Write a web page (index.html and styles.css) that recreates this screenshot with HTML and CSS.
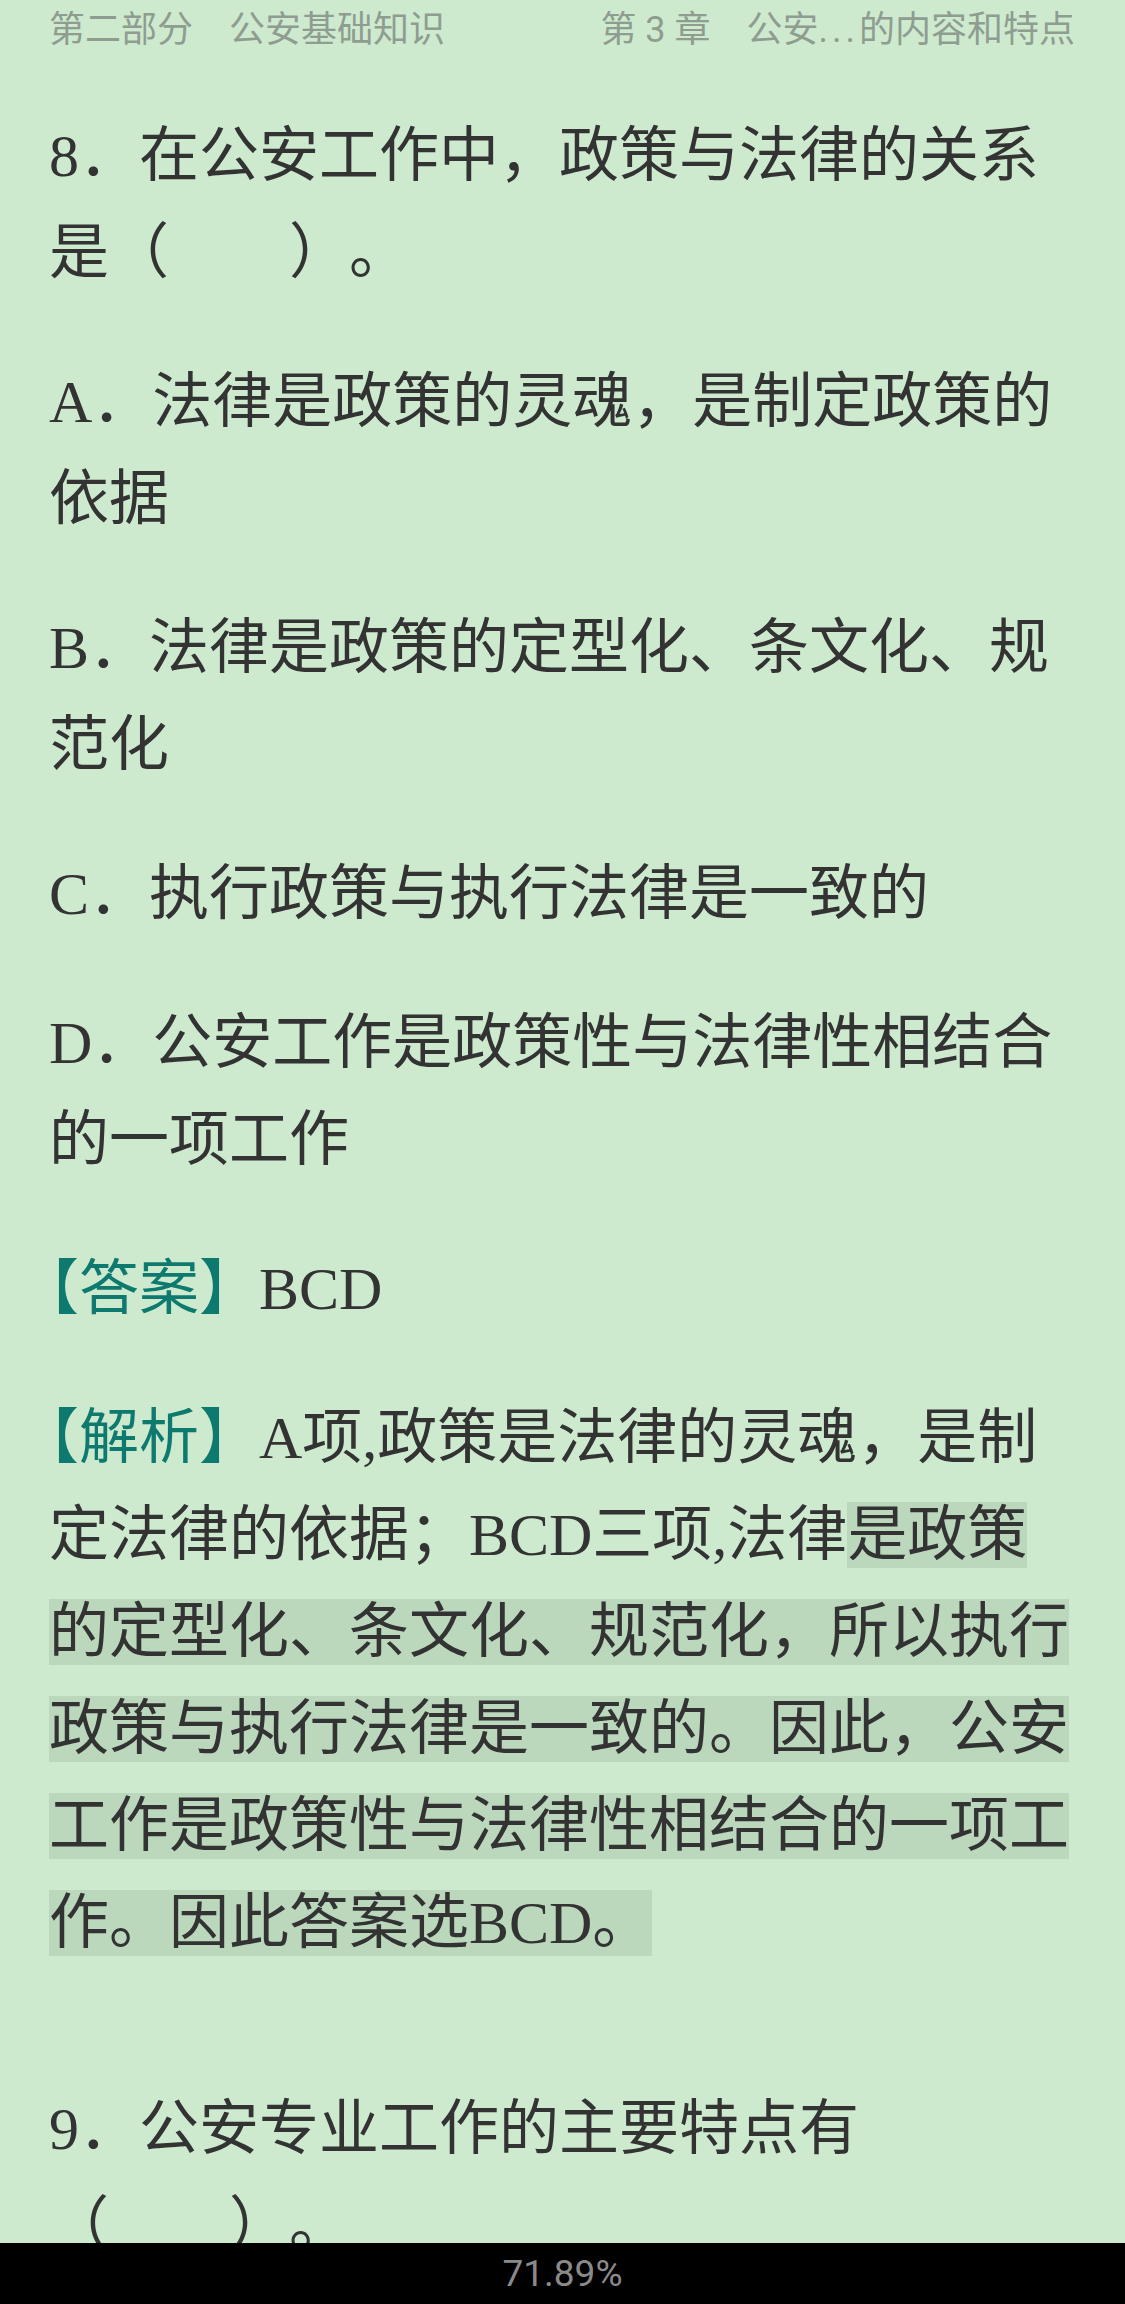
FILE: index.html
```html
<!DOCTYPE html>
<html lang="zh-CN">
<head>
    <meta charset="UTF-8">
    <meta name="viewport" content="width=device-width, initial-scale=1.0">
    <title>公安基础知识</title>
    <link rel="stylesheet" href="styles.css">
</head>
<body>
    <div class="header">
        <span>第二部分　公安基础知识</span>
        <span>第 3 章　公安<span class="dots">...</span>的内容和特点</span>
    </div>

    <div class="content">
        <p>8．在公安工作中，政策与法律的关系是（　　）。</p>
        <p>A．法律是政策的灵魂，是制定政策的依据</p>
        <p>B．法律是政策的定型化、条文化、规范化</p>
        <p>C．执行政策与执行法律是一致的</p>
        <p>D．公安工作是政策性与法律性相结合的一项工作</p>
        <p><span class="tag"><span class="open">【</span>答案】</span>BCD</p>
        <p class="analysis"><span class="tag"><span class="open">【</span>解析】</span>A项,政策是法律的灵魂，是制定法律的依据；BCD三项,法律<span class="mark">是政策的定型化、条文化、规范化，所以执行政策与执行法律是一致的。因此，公安工作是政策性与法律性相结合的一项工作。因此答案选BCD。</span></p>
        <p>9．公安专业工作的主要特点有（　　）。</p>
        <p>A．专业性</p>
    </div>

    <div class="progress">71.89%</div>
</body>
</html>
```

FILE: styles.css
```css
body {
    margin: 0;
    background-color: #cdeacf;
    font-family: "Liberation Serif", "Noto Sans CJK SC", serif;
    color: #333333;
}

.header {
    display: flex;
    justify-content: space-between;
    height: 60px;
    line-height: 60px;
    padding: 0 50px 0 49px;
    font-family: Roboto, "Noto Sans CJK SC", sans-serif;
    font-size: 36px;
    color: #8f9d90;
}

.dots {
    letter-spacing: 4px;
}

.content {
    margin-top: 48px;
    padding: 0 50px 0 49px;
}

.content p {
    margin: 0 0 52px;
    font-size: 60px;
    line-height: 97px;
    text-spacing-trim: space-all;
}

.content p.analysis {
    margin-bottom: 109px;
}

.tag {
    color: #0e7a6f;
}

.open {
    font-feature-settings: "halt";
}

.mark {
    background-color: #bbd8bd;
}

.progress {
    position: fixed;
    left: 0;
    right: 0;
    bottom: 0;
    height: 61px;
    line-height: 61px;
    background-color: #000;
    color: #8a8a8a;
    text-align: center;
    font-family: Roboto, "Noto Sans", sans-serif;
    font-size: 37px;
}
```
